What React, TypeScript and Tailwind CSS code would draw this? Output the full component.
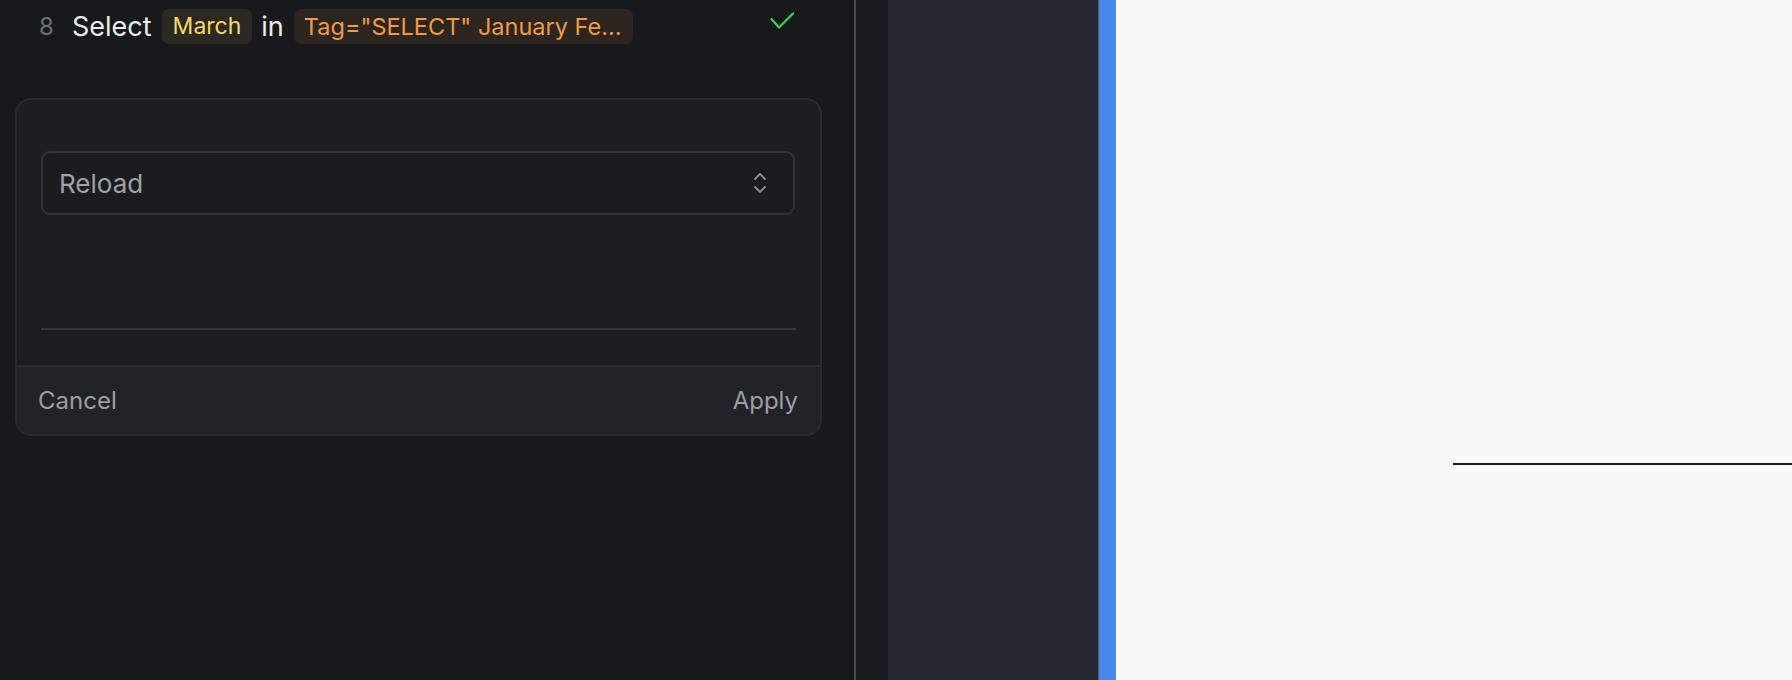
const font = { fontFamily: "Inter, 'Noto Sans', sans-serif" };

function CheckIcon() {
  return (
    <svg width="24" height="18" viewBox="0 0 24 18" fill="none">
      <polyline points="1.5,7 9,15.5 23,1.5" stroke="#35d64a" strokeWidth="2.2" strokeLinecap="round" strokeLinejoin="round" />
    </svg>
  );
}

function UpDownIcon() {
  return (
    <svg width="14" height="24" viewBox="0 0 14 24" fill="none">
      <path d="M2 8 L7 3 L12 8" stroke="#8e8e93" strokeWidth="1.8" strokeLinecap="round" strokeLinejoin="round" />
      <path d="M2 16 L7 21 L12 16" stroke="#8e8e93" strokeWidth="1.8" strokeLinecap="round" strokeLinejoin="round" />
    </svg>
  );
}

export default function App() {
  return (
    <div className="flex h-[680px] w-[1792px] overflow-hidden" style={font}>
      {/* Steps panel */}
      <div className="w-[854px] shrink-0 bg-[#18191c]">
        <div className="flex items-center h-[35px] mt-[9px] pl-[39px] w-[794px]">
          <span className="w-[14px] text-[24px] leading-none text-[#6e6e73]">8</span>
          <span className="ml-[19px] text-[27px] leading-none text-[#ececee]">Select</span>
          <span className="ml-[10px] h-[35px] px-[11px] rounded-[7px] bg-[#2b2922] text-[#f7d86a] text-[23px] flex items-center">March</span>
          <span className="ml-[9px] text-[27px] leading-none text-[#ececee]">in</span>
          <span className="ml-[10px] h-[35px] w-[339px] px-[10px] rounded-[7px] bg-[#2c2520] text-[#f09b47] text-[23.5px] flex items-center whitespace-nowrap">Tag="SELECT" January Fe...</span>
          <span className="ml-auto -mt-[12px]"><CheckIcon /></span>
        </div>

        <div className="ml-[15px] mt-[54px] w-[807px] rounded-[16px] border-2 border-[#2a2b30] bg-[#1d1e22] overflow-hidden">
          <div className="pt-[51px] pl-[24px] pb-[35px]">
            <div className="w-[754px] h-[64px] rounded-[9px] border-2 border-[#333439] bg-[#1b1c20] flex items-center justify-between pl-[16px] pr-[26px]">
              <span className="text-[26px] text-[#a1a1a6]">Reload</span>
              <UpDownIcon />
            </div>
            <div className="mt-[113px] w-[755px] h-[2px] bg-[#35363b]" />
          </div>
          <div className="border-t-2 border-[#2c2d32] bg-[#222328] h-[69px] flex items-center justify-between pl-[21px] pr-[22px]">
            <span className="text-[24px] text-[#9d9da3]">Cancel</span>
            <span className="text-[24px] text-[#9d9da3]">Apply</span>
          </div>
        </div>
      </div>

      <div className="w-[2px] shrink-0 bg-[#4a4b50]" />
      <div className="w-[32px] shrink-0 bg-[#1b1c1f]" />
      <div className="w-[210px] shrink-0 bg-[#262730]" />
      <div className="w-[1px] shrink-0 bg-[#5a5b62]" />
      <div className="w-[17px] shrink-0 bg-[#4a88ec]" />

      {/* Preview canvas */}
      <div className="flex-1 bg-[#f8f8f8] flex flex-col">
        <div className="mt-[463px] ml-[337px] h-[2px] bg-[#1e1e1e]" />
      </div>
    </div>
  );
}
